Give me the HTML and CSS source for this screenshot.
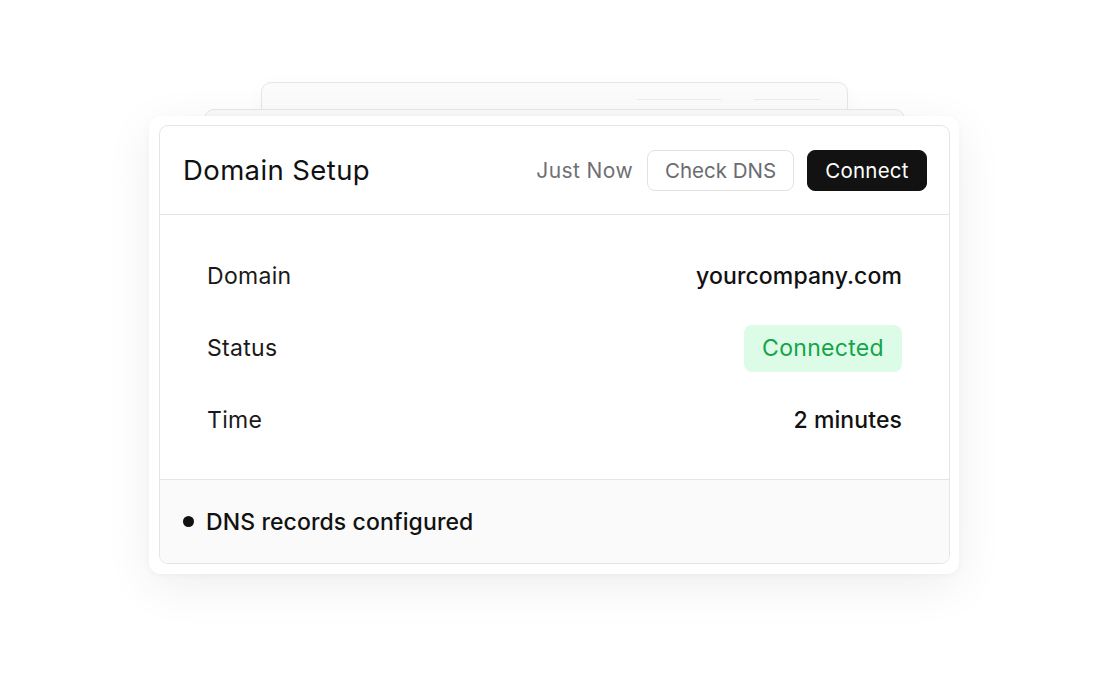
FILE: index.html
```html
<!DOCTYPE html>
<html lang="en">
<head>
<meta charset="utf-8">
<title>Domain Setup</title>
<link rel="stylesheet" href="styles.css">
</head>
<body>
<div class="stage">
  <div class="stack">
    <div class="ghost ghost-back">
      <span class="ghost-btn ghost-btn-a"></span>
      <span class="ghost-btn ghost-btn-b"></span>
    </div>
    <div class="ghost ghost-mid"></div>
    <div class="frame">
      <div class="card">
        <div class="card-header">
          <h1 class="title">Domain Setup</h1>
          <div class="actions">
            <span class="timestamp">Just Now</span>
            <button class="btn btn-outline">Check DNS</button>
            <button class="btn btn-dark">Connect</button>
          </div>
        </div>
        <div class="card-body">
          <div class="row">
            <span class="label">Domain</span>
            <span class="value">yourcompany.com</span>
          </div>
          <div class="row">
            <span class="label">Status</span>
            <span class="badge">Connected</span>
          </div>
          <div class="row">
            <span class="label">Time</span>
            <span class="value">2 minutes</span>
          </div>
        </div>
        <div class="card-footer">
          <span class="dot"></span>
          <span class="footer-text">DNS records configured</span>
        </div>
      </div>
    </div>
  </div>
</div>
</body>
</html>
```

FILE: styles.css
```css
* { box-sizing: border-box; }

html, body {
  margin: 0;
  padding: 0;
  background: #ffffff;
  font-family: "Inter", "Noto Sans", "Liberation Sans", sans-serif;
  color: #111111;
}

.stage {
  width: 1108px;
  height: 690px;
  display: flex;
  align-items: center;
  justify-content: center;
}

.stack {
  position: relative;
  width: 810px;
}

.ghost {
  position: absolute;
  border: 1px solid #e6e6e6;
  border-radius: 10px;
  background: #fbfbfb;
  height: 200px;
}

.ghost-back {
  top: -34px;
  left: 112px;
  right: 111px;
  box-shadow: 0 4px 20px rgba(0, 0, 0, 0.03);
}

.ghost-mid {
  top: -7px;
  left: 55px;
  right: 54px;
  background: #fafafa;
}

.ghost-btn {
  position: absolute;
  top: 16px;
  height: 20px;
  border-top: 1px solid #ececec;
}

.ghost-btn-a { left: 375px; width: 84px; }
.ghost-btn-b { left: 492px; width: 66px; }

.frame {
  position: relative;
  background: #ffffff;
  border-radius: 12px;
  padding: 9px 9px 10px 10px;
  box-shadow: 0 12px 48px rgba(0, 0, 0, 0.07), 0 2px 6px rgba(0, 0, 0, 0.03);
}

.card {
  border: 1px solid #e5e5e5;
  border-radius: 9px;
  overflow: hidden;
  background: #ffffff;
}

.card-header {
  height: 89px;
  display: flex;
  align-items: center;
  justify-content: space-between;
  padding: 0 22px 0 23px;
  border-bottom: 1px solid #e5e5e5;
}

.title {
  margin: 0;
  font-size: 27.5px;
  font-weight: 400;
  letter-spacing: 0.4px;
  color: #111111;
}

.actions {
  display: flex;
  align-items: center;
  gap: 13px;
}

.timestamp {
  font-size: 21px;
  letter-spacing: 0.4px;
  color: #6f6f74;
  margin-right: 1px;
}

.btn {
  font-family: inherit;
  font-size: 20.5px;
  height: 41px;
  border-radius: 8px;
  cursor: pointer;
  display: flex;
  align-items: center;
  justify-content: center;
}

.btn-outline {
  width: 147px;
  background: #ffffff;
  border: 1px solid #e2e2e2;
  color: #6b6b70;
}

.btn-dark {
  width: 120px;
  background: #121212;
  border: 1px solid #121212;
  color: #ffffff;
  font-weight: 400;
  letter-spacing: 0.2px;
}

.card-body {
  padding: 25px 47px 23px 47px;
}

.row {
  height: 72px;
  display: flex;
  align-items: center;
  justify-content: space-between;
}

.label {
  font-size: 23px;
  letter-spacing: 0.3px;
  color: #1a1a1a;
}

.value {
  font-size: 23px;
  font-weight: 500;
  letter-spacing: 0.1px;
  color: #111111;
}

.badge {
  width: 158px;
  height: 47px;
  border-radius: 8px;
  background: #dcfce7;
  color: #16a34a;
  font-size: 23px;
  font-weight: 400;
  letter-spacing: 0.3px;
  display: flex;
  align-items: center;
  justify-content: center;
}

.card-footer {
  height: 84px;
  background: #fafafa;
  border-top: 1px solid #e5e5e5;
  display: flex;
  align-items: center;
  gap: 12px;
  padding: 0 23px;
}

.dot {
  width: 11px;
  height: 11px;
  border-radius: 50%;
  background: #111111;
}

.footer-text {
  font-size: 23px;
  font-weight: 500;
  letter-spacing: 0.1px;
  color: #111111;
}
```
